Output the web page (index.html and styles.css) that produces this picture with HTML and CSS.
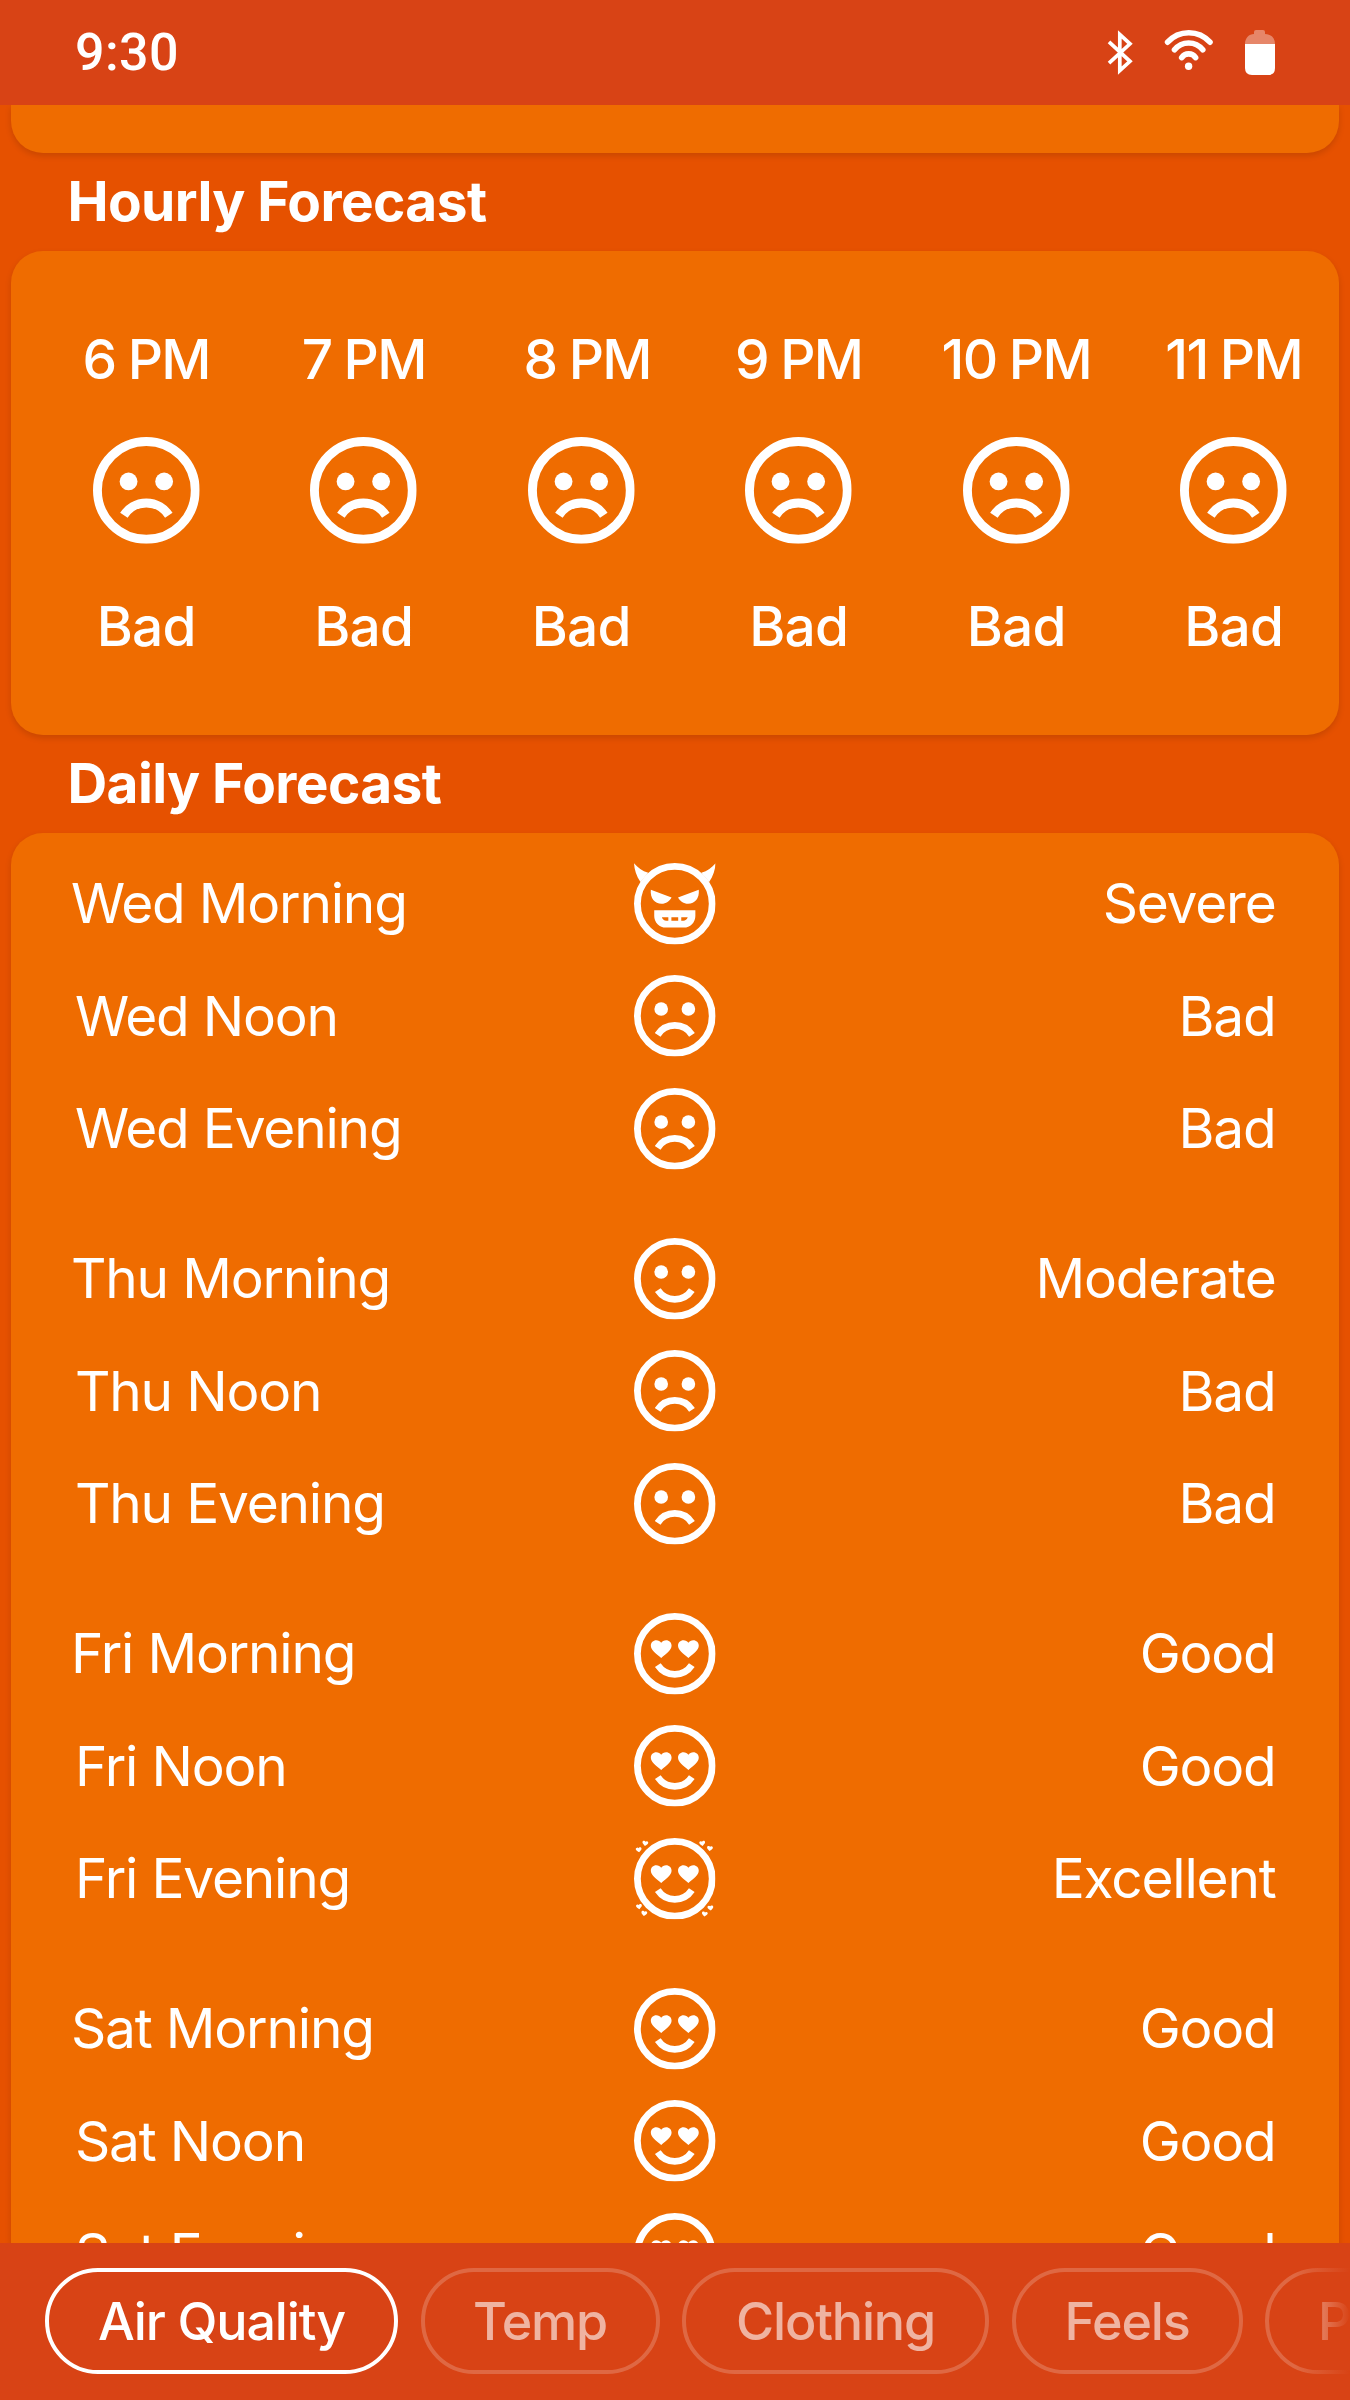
FILE: index.html
```html
<!DOCTYPE html>
<html lang="en">
<head>
    <meta charset="UTF-8">
    <meta name="viewport" content="width=device-width, initial-scale=1.0">
    <title>Air Quality Forecast</title>
    <link rel="stylesheet" href="styles.css">
</head>
<body>
    <!-- face icons -->
    <svg class="sprite" width="0" height="0">
        <defs>
            <path id="heart" d="M0 2.6C-1.6 1.2-3.05.3-3.05-1-3.05-1.9-2.35-2.6-1.45-2.6-.85-2.6-.3-2.3 0-1.85.3-2.3.85-2.6 1.45-2.6 2.35-2.6 3.05-1.9 3.05-1 3.05.3 1.6 1.2 0 2.6Z" fill="#fff"/>
            <circle id="ring" r="11" fill="none" stroke="#fff" stroke-width="2"/>
            <path id="smile" d="M-5 3.35A6 6 0 0 0 5 3.35" fill="none" stroke="#fff" stroke-width="2"/>
        </defs>
        <symbol id="bad" viewBox="-12 -12 24 24">
            <use href="#ring"/>
            <circle cx="-4" cy="-2" r="2" fill="#fff"/>
            <circle cx="4" cy="-2" r="2" fill="#fff"/>
            <path d="M-5.05 5.6A6 6 0 0 1 5.05 5.6" fill="none" stroke="#fff" stroke-width="2"/>
        </symbol>
        <symbol id="moderate" viewBox="-12 -12 24 24">
            <use href="#ring"/>
            <circle cx="-4" cy="-2" r="2" fill="#fff"/>
            <circle cx="4" cy="-2" r="2" fill="#fff"/>
            <use href="#smile"/>
        </symbol>
        <symbol id="good" viewBox="-12 -12 24 24">
            <use href="#ring"/>
            <use href="#heart" transform="translate(-4 -1.4)"/>
            <use href="#heart" transform="translate(4 -1.4)"/>
            <use href="#smile"/>
        </symbol>
        <symbol id="excellent" viewBox="-12 -12 24 24">
            <use href="#good" x="-12" y="-12" width="24" height="24"/>
            <use href="#heart" transform="translate(-10.6 -8.5) rotate(-8) scale(.28)"/>
            <use href="#heart" transform="translate(-8.7 -10.4) rotate(8) scale(.28)"/>
            <use href="#heart" transform="translate(8.1 -10.4) rotate(-8) scale(.28)"/>
            <use href="#heart" transform="translate(10.3 -8.9) rotate(8) scale(.28)"/>
            <use href="#heart" transform="translate(-10.5 8.2) rotate(-8) scale(.28)"/>
            <use href="#heart" transform="translate(-9 10.2) rotate(8) scale(.28)"/>
            <use href="#heart" transform="translate(8.8 10.4) rotate(8) scale(.28)"/>
            <use href="#heart" transform="translate(10.5 8.6) rotate(-8) scale(.28)"/>
        </symbol>
        <symbol id="severe" viewBox="-12 -12 24 24">
            <use href="#ring"/>
            <g fill="#fff">
                <path d="M-12-11.9C-10.9-10.6-9.6-9.6-7.8-9.1L-10.1-6.4C-11.3-8.1-11.9-10-12-11.9Z"/>
                <path d="M12-11.9C10.9-10.6 9.6-9.6 7.8-9.1L10.1-6.4C11.3-8.1 11.9-10 12-11.9Z"/>
                <path d="M-7.05-4.1L-.95-1.85C-1.5-.8-2.6 0-3.9 0-5.9 0-7.3-1.6-7.05-4.1Z"/>
                <path d="M7.05-4.1L.95-1.85C1.5-.8 2.6 0 3.9 0 5.9 0 7.3-1.6 7.05-4.1Z"/>
                <path fill-rule="evenodd" d="M-6.05 1.9H6.05V3.6A3.4 3.4 0 0 1 2.65 7H-2.65A3.4 3.4 0 0 1-6.05 3.6ZM-3.8 3.95C-3.6 4.6-3.1 5-2.5 5H-1.9V3.95ZM-1 3.95V5H1V3.95ZM1.9 3.95V5H2.5C3.1 5 3.6 4.6 3.8 3.95Z"/>
            </g>
        </symbol>
    </svg>

    <div id="phone">
        <header class="status-bar">
            <span class="clock">9:30</span>
            <svg class="status-icons" width="180" height="61" viewBox="1105 22 180 61" fill="none" stroke="#fff">
                <path d="M1109 41.8L1130 61.3 1119.8 70.6V34.4L1130 43.8 1109 63.2" stroke-width="3.7"/>
                <g stroke-width="5.6" stroke-linecap="round">
                    <path d="M1167.6 42.2A28.4 28.4 0 0 1 1210 42.2"/>
                    <path d="M1174.5 49.8A18 18 0 0 1 1202.8 49.8"/>
                    <path d="M1181.7 57.6A8.4 8.4 0 0 1 1195.6 57.6"/>
                </g>
                <circle cx="1188.6" cy="66.2" r="3.7" fill="#fff" stroke="none"/>
                <path d="M1245 44C1245 38 1249 34 1254 34V32Q1254 30 1256 30H1263Q1265 30 1265 32V34C1271 34 1275 38 1275 44Z" fill="#fff" fill-opacity=".36" stroke="none"/>
                <path d="M1245 44H1275V68Q1275 75 1268 75H1252Q1245 75 1245 68Z" fill="#fff" stroke="none"/>
            </svg>
        </header>

        <main>
            <div class="card card-end"></div>

            <h2>Hourly Forecast</h2>
            <div class="card hourly">
                <div class="hour"><span>6 PM</span><svg><use href="#bad"/></svg><span>Bad</span></div>
                <div class="hour"><span>7 PM</span><svg><use href="#bad"/></svg><span>Bad</span></div>
                <div class="hour"><span class="nudge">8 PM</span><svg><use href="#bad"/></svg><span>Bad</span></div>
                <div class="hour"><span>9 PM</span><svg><use href="#bad"/></svg><span>Bad</span></div>
                <div class="hour"><span>10 PM</span><svg><use href="#bad"/></svg><span>Bad</span></div>
                <div class="hour"><span>11 PM</span><svg><use href="#bad"/></svg><span>Bad</span></div>
            </div>

            <h2>Daily Forecast</h2>
            <div class="card daily">
                <div class="day">
                    <div class="row"><span>Wed Morning</span><svg><use href="#severe"/></svg><span>Severe</span></div>
                    <div class="row"><span>Wed Noon</span><svg><use href="#bad"/></svg><span>Bad</span></div>
                    <div class="row"><span>Wed Evening</span><svg><use href="#bad"/></svg><span>Bad</span></div>
                </div>
                <div class="day">
                    <div class="row"><span>Thu Morning</span><svg><use href="#moderate"/></svg><span>Moderate</span></div>
                    <div class="row"><span>Thu Noon</span><svg><use href="#bad"/></svg><span>Bad</span></div>
                    <div class="row"><span>Thu Evening</span><svg><use href="#bad"/></svg><span>Bad</span></div>
                </div>
                <div class="day">
                    <div class="row"><span>Fri Morning</span><svg><use href="#good"/></svg><span>Good</span></div>
                    <div class="row"><span>Fri Noon</span><svg><use href="#good"/></svg><span>Good</span></div>
                    <div class="row"><span>Fri Evening</span><svg><use href="#excellent"/></svg><span>Excellent</span></div>
                </div>
                <div class="day">
                    <div class="row"><span>Sat Morning</span><svg><use href="#good"/></svg><span>Good</span></div>
                    <div class="row"><span>Sat Noon</span><svg><use href="#good"/></svg><span>Good</span></div>
                    <div class="row"><span>Sat Evening</span><svg><use href="#good"/></svg><span>Good</span></div>
                </div>
            </div>
        </main>

        <nav>
            <button class="active w-air">Air Quality</button>
            <button class="w-temp">Temp</button>
            <button class="w-clothing">Clothing</button>
            <button class="w-feels">Feels</button>
            <button class="w-precip">Precip</button>
        </nav>
    </div>
</body>
</html>
```
FILE: styles.css
```css
* { box-sizing: border-box; }
body { margin: 0; background: #e65100; color: #fff; font-family: Inter, "Liberation Sans", sans-serif; overflow: hidden; }
.sprite { position: absolute; }
#phone { width: 1350px; height: 2400px; display: flex; flex-direction: column; overflow: hidden; }

.status-bar { flex: none; height: 105px; padding: 0 65px 0 75px; background: #d84315; display: flex; align-items: center; justify-content: space-between; }
.clock { font: 500 52px/105px Roboto, sans-serif; letter-spacing: 0.4px; }

main { flex: 1; min-height: 0; padding: 0 11px; overflow: hidden; }
.card { background: #ef6c00; border-radius: 32px; box-shadow: 0 3px 6px rgba(0, 0, 0, 0.13); }
.card-end { height: 48px; border-radius: 0 0 32px 32px; }
h2 { margin: 0; padding-left: 56.5px; height: 98px; font-size: 55px; font-weight: 700; line-height: 97px; letter-spacing: -0.6px; }

.hourly { height: 483.5px; padding: 68px 0 0 26.5px; display: flex; overflow: hidden; }
.hour { flex: none; width: 217.5px; display: flex; flex-direction: column; align-items: center; font-size: 55px; font-weight: 500; line-height: 80px; letter-spacing: -0.8px; }
.hour span:first-child { letter-spacing: -1.6px; word-spacing: -1px; }
.hour svg { width: 106.7px; height: 106.7px; margin: 38px 0 42.3px; }
.nudge { padding-left: 12px; }

.daily { padding: 15px 63.5px 0 64px; font-size: 55px; font-weight: 400; letter-spacing: -1.2px; }
.day { margin-bottom: 37.5px; }
.row { display: grid; grid-template-columns: 1fr 81.6px 1fr; align-items: center; height: 112.5px; line-height: 111.5px; white-space: nowrap; }
.row svg { width: 81.6px; height: 81.6px; overflow: visible; }
.row span:last-child { text-align: right; }
.row:first-child span:first-child { margin-left: -4px; }

nav { flex: none; height: 157px; padding: 25px 0 0 45px; background: #d84315; display: flex; align-items: flex-start; gap: 22.5px; position: relative; overflow: hidden; }
nav::after { content: ""; position: absolute; top: 0; right: 0; width: 56px; height: 100%; background: linear-gradient(to right, rgba(216, 67, 21, 0), #d84315); }
nav button { flex: none; height: 106px; padding: 0; border: 4px solid rgba(255, 255, 255, 0.2); border-radius: 53px; background: none; color: rgba(255, 255, 255, 0.6); font-family: inherit; font-size: 52px; font-weight: 500; letter-spacing: -1.15px; }
nav .active { border-color: #fff; color: #fff; }
.w-air { width: 353px; }
.w-temp { width: 239px; }
.w-clothing { width: 307px; }
.w-feels { width: 231px; }
nav .w-precip { width: 277px; padding-left: 49px; text-align: left; }
```
